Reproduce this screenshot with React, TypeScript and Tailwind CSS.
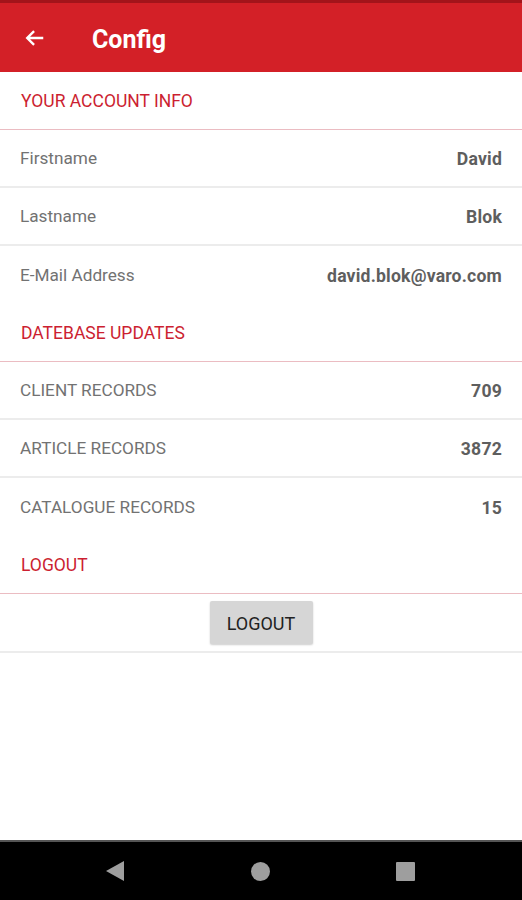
const SectionHeader = ({ title }: { title: string }) => (
  <div className="flex h-[58px] items-center border-b-[1.5px] border-[#ebbcc2] px-[21px] pt-[2px] text-[17.5px] text-[#cc1f31]">
    {title}
  </div>
);

interface RowProps {
  label: string;
  value: string;
  last?: boolean;
}

const Row = ({ label, value, last }: RowProps) => (
  <div
    className={`flex h-[58px] items-center justify-between px-5 pt-[2px] ${
      last ? "" : "border-b-2 border-[#ececec]"
    }`}
  >
    <span className="text-[17.2px] text-[#727272]">{label}</span>
    <span className="text-[17.6px] font-bold tracking-[0.2px] text-[#5e5e5e]">{value}</span>
  </div>
);

export default function App() {
  return (
    <div className="flex h-[900px] w-[522px] flex-col bg-white font-['Roboto',sans-serif]">
      <div className="h-[3px] bg-[#a3141a]" />
      <header className="flex h-[69px] items-center bg-[#d32027] text-white">
        <svg className="ml-[24px] h-[22px] w-[22px]" viewBox="0 0 24 24" fill="none">
          <path d="M21 12H4M11 4.5L3.5 12l7.5 7.5" stroke="white" strokeWidth="2.6" />
        </svg>
        <h1 className="ml-[46px] pt-[4px] text-[25px] font-bold">Config</h1>
      </header>

      <SectionHeader title="YOUR ACCOUNT INFO" />
      <Row label="Firstname" value="David" />
      <Row label="Lastname" value="Blok" />
      <Row label="E-Mail Address" value="david.blok@varo.com" last />

      <SectionHeader title="DATEBASE UPDATES" />
      <Row label="CLIENT RECORDS" value="709" />
      <Row label="ARTICLE RECORDS" value="3872" />
      <Row label="CATALOGUE RECORDS" value="15" last />

      <SectionHeader title="LOGOUT" />
      <div className="flex h-[59px] items-center justify-center border-b-2 border-[#ececec]">
        <button className="h-[43px] w-[103px] rounded-[2px] bg-[#d6d6d6] pt-[1px] text-[18px] text-[#222] shadow-[0_1px_2px_rgba(0,0,0,0.2)]">
          LOGOUT
        </button>
      </div>

      <div className="flex-1" />

      <nav className="flex h-[60px] items-center justify-center gap-[126px] border-t-2 border-[#555] bg-black pr-[2px]">
        <svg className="h-[22px] w-[20px]" viewBox="0 0 20 22">
          <path d="M19 1v20L1 11z" fill="#9e9e9e" />
        </svg>
        <span className="h-[19px] w-[19px] rounded-full bg-[#9e9e9e]" />
        <span className="h-[19px] w-[19px] rounded-[1px] bg-[#9e9e9e]" />
      </nav>
    </div>
  );
}
